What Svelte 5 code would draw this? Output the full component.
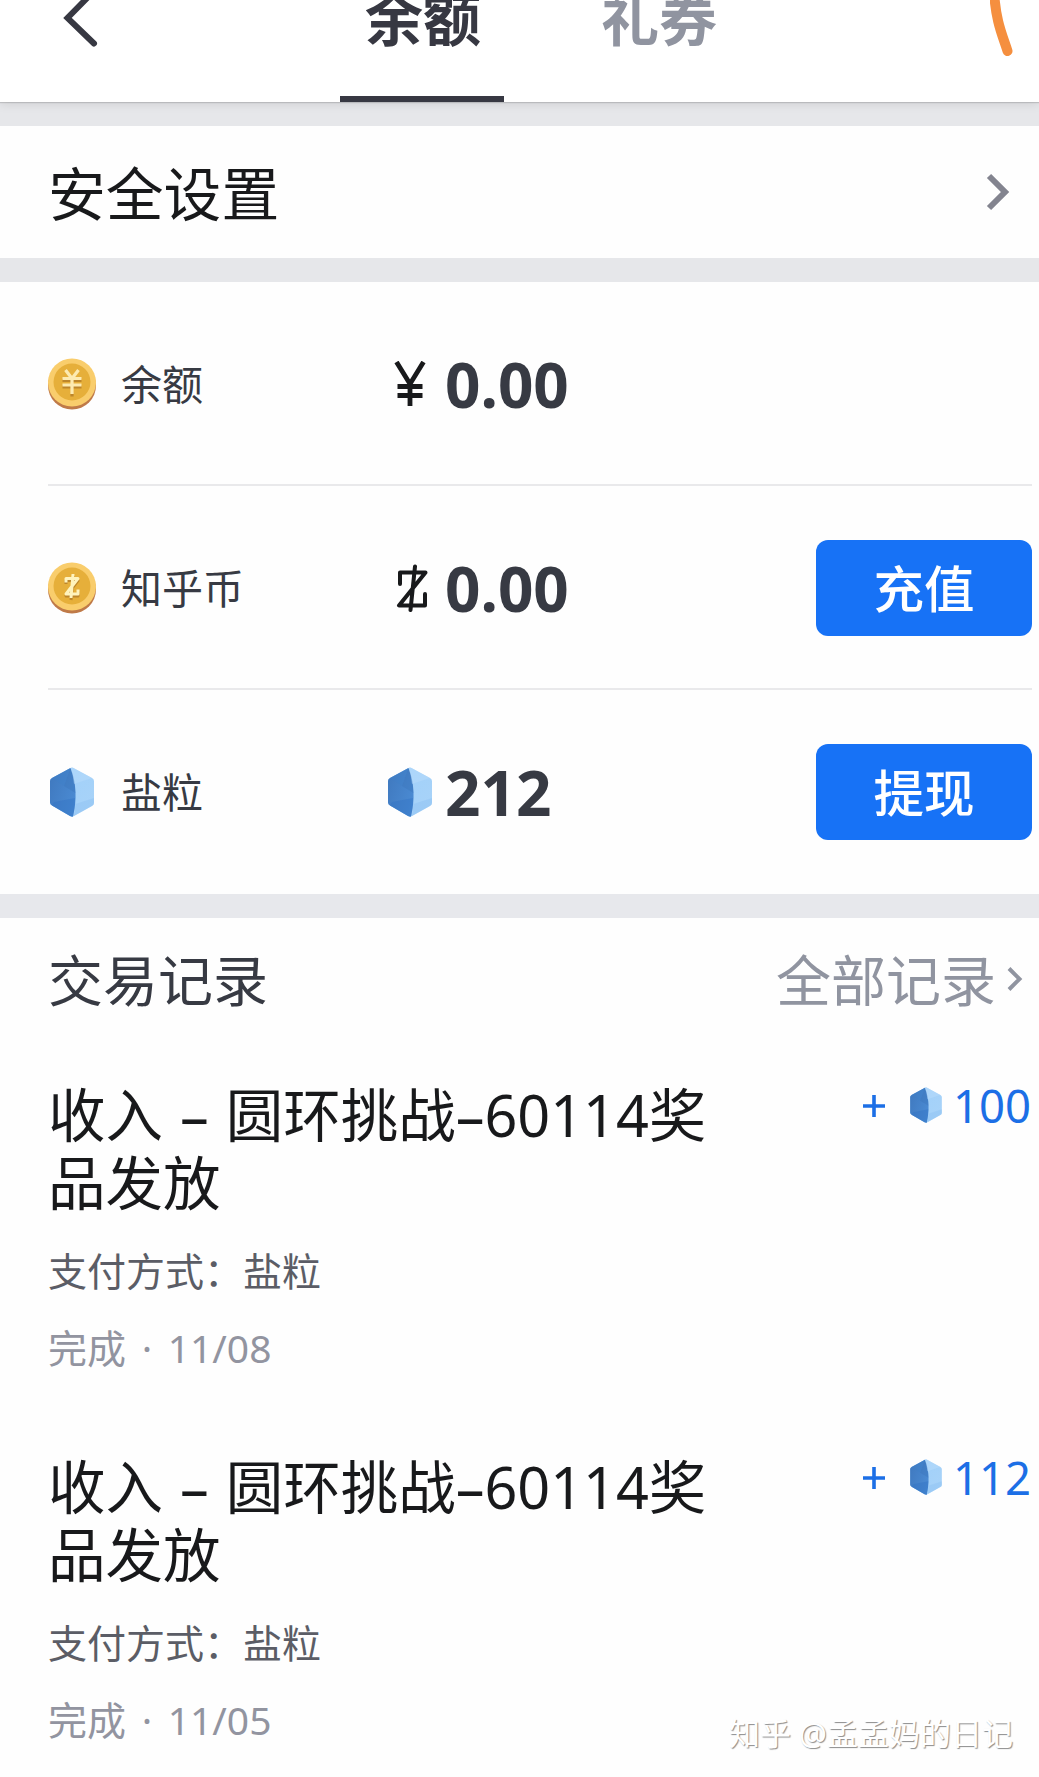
<script>
  const tabs = [
    { name: '余额', active: true },
    { name: '礼券', active: false },
  ];

  const assets = [
    { label: '余额', icon: 'yuan', symbol: 'yuan', value: '0.00', action: '' },
    { label: '知乎币', icon: 'zcoin', symbol: 'z', value: '0.00', action: '充值' },
    { label: '盐粒', icon: 'salt', symbol: 'salt', value: '212', action: '提现' },
  ];

  const records = [
    { title: '收入 – 圆环挑战–60114奖品发放', method: '盐粒', date: '11/08', amount: '100' },
    { title: '收入 – 圆环挑战–60114奖品发放', method: '盐粒', date: '11/05', amount: '112' },
  ];
</script>

{#snippet salt()}
  <svg class="salt" viewBox="0 0 44 50" aria-hidden="true">
    <defs>
      <linearGradient id="saltDark" x1="0" y1="0" x2="1" y2="0.6">
        <stop offset="0" stop-color="#3f78be" />
        <stop offset="1" stop-color="#4a8ad2" />
      </linearGradient>
      <linearGradient id="saltLight" x1="0" y1="0" x2="1" y2="1">
        <stop offset="0" stop-color="#9fd0fa" />
        <stop offset="1" stop-color="#a9d3f8" />
      </linearGradient>
    </defs>
    <path d="M20.500 1Q22 0 23.500 1L42 11Q44 12 44 14V36Q44 38 42 39L24 49Q22 50 20 49L2 38.500Q0 37.500 0 35.500V14Q0 12 2 11Z" fill="url(#saltLight)" />
    <path d="M20.500 1L2 11Q0 12 0 14V35.500Q0 37.500 2 38.500L20 49Q22 50 23 49.500Q26 36 25.500 26Q25 12 20.500 1Z" fill="url(#saltDark)" />
    <path d="M20.500 1L14 19L25.500 26Q25 12 20.500 1Z" fill="#3a74b8" opacity=".35" />
    <path d="M20.500 1L2 11L14 19Z" fill="#3f7fc9" opacity=".4" />
    <path d="M4 35L25 31Q25 41 23 49.500L20 49L2 38.500Z" fill="#2f70c2" opacity=".4" />
    <path d="M20.500 1Q22 0 23.500 1L42 11L24 17Q23 8 20.500 1Z" fill="#b8dcfb" opacity=".5" />
    <path d="M44 31V36Q44 38 42 39L24 49Q25 42 25.300 37Z" fill="#86bdf0" opacity=".35" />
  </svg>
{/snippet}

{#snippet coin(kind)}
  <svg class="coin" viewBox="0 0 48 52" aria-hidden="true">
    <ellipse cx="24" cy="27.500" rx="24" ry="24" fill="#bf7a48" />
    <circle cx="24" cy="24.500" r="24" fill="#f9cd6c" />
    <circle cx="24" cy="24" r="18.500" fill="#e6af3a" />
    {#if kind === 'yuan'}
      <g fill="none" stroke-width="3.200">
        <path d="M14.500 22.500H33.500M14.500 29H33.500M24 36V38.500" stroke="#bd862b" />
        <path d="M17.500 12L24 20.500L30.500 12M24 20V36M14.500 20.500H33.500M14.500 27H33.500" stroke="#fdeab0" />
      </g>
    {:else}
      <g fill="none" stroke-width="3" stroke-linejoin="round">
        <path d="M18 22V18.500H30L18 34H30V29.500M25.500 14L23 38" stroke="#bd862b" />
        <path d="M18 20.500V16.500H30L18 32H30V27.500M25 12L23 36" stroke="#fff3bd" />
      </g>
    {/if}
  </svg>
{/snippet}

<div class="page">
  <header class="top">
    <svg class="back" viewBox="0 0 40 60" aria-label="返回">
      <path d="M32 4L6.500 30L33 55.500" />
    </svg>
    <nav class="tabs">
      {#each tabs as tab}
        <span class="tab" class:active={tab.active}>{tab.name}</span>
      {/each}
    </nav>
    <svg class="mark" viewBox="0 0 30 60" aria-hidden="true">
      <path d="M4 -8C6 22 12 34 17.500 51" />
    </svg>
  </header>

  <section class="security">
    <span>安全设置</span>
    <svg class="next" viewBox="0 0 24 38" aria-hidden="true"><path d="M3 3L19 19L3 35" /></svg>
  </section>

  <section class="assets">
    {#each assets as asset}
      <div class="asset">
        <div class="icon">
          {#if asset.icon === 'salt'}{@render salt()}{:else}{@render coin(asset.icon)}{/if}
        </div>
        <span class="label">{asset.label}</span>
        <div class="symbol">
          {#if asset.symbol === 'yuan'}
            <svg class="glyph" viewBox="0 0 32 46" aria-label="¥">
              <path d="M2.500 1L16 23L29.500 1M16 22V45M3.500 25.500H28.500M3.500 34.500H28.500" stroke-width="4.800" />
            </svg>
          {:else if asset.symbol === 'z'}
            <svg class="glyph z" viewBox="0 0 32 48" aria-hidden="true">
              <path d="M4 20V8.500H29.500L3 41.500H29V30M19 2.500L14.500 46" stroke-width="4" stroke-linecap="round" stroke-linejoin="round" />
            </svg>
          {:else}
            {@render salt()}
          {/if}
        </div>
        <span class="value">{asset.value}</span>
        {#if asset.action}<button class="action">{asset.action}</button>{/if}
      </div>
    {/each}
  </section>

  <section class="history">
    <div class="heading">
      <h2>交易记录</h2>
      <span class="all">
        <span class="all-text">全部记录</span>
        <svg viewBox="0 0 16 24" aria-hidden="true"><path d="M2 1.500L12.500 12L2 22.500" /></svg>
      </span>
    </div>
    {#each records as record}
      <article class="record">
        <div class="info">
          <h3>{record.title}</h3>
          <p class="method">支付方式：{record.method}</p>
          <p class="status">完成 · {record.date}</p>
        </div>
        <div class="amount">
          <svg class="plus" viewBox="0 0 22 22" aria-label="+"><path d="M11 0V22M0 11H22" /></svg>
          {@render salt()}
          <span>{record.amount}</span>
        </div>
      </article>
    {/each}
  </section>

  <div class="watermark">知乎 @孟孟妈的日记</div>
</div>

<style>
  :global(body) {
    background: #fefefe;
  }
  .page {
    position: relative;
    width: 1039px;
    height: 1777px;
    overflow: hidden;
    background: #fefefe;
    color: #18191b;
    font-family: 'Noto Sans', 'Noto Sans CJK SC', sans-serif;
  }
  .top {
    position: relative;
    box-sizing: border-box;
    display: flex;
    height: 102px;
    padding-left: 61px;
    background: #fff;
    box-shadow: 0 1px 1px rgba(0, 0, 0, 0.14), 0 2px 10px rgba(0, 0, 0, 0.1);
  }
  .back {
    width: 40px;
    height: 60px;
    margin-top: -12px;
  }
  .back path,
  .mark path,
  .next path,
  .all path,
  .plus path,
  .glyph path {
    fill: none;
  }
  .back path {
    stroke: #373842;
    stroke-width: 6;
    stroke-linecap: round;
  }
  .tabs {
    display: flex;
    gap: 72px;
    margin-left: 239px;
  }
  .tab {
    box-sizing: border-box;
    width: 164px;
    height: 102px;
    padding-left: 2px;
    color: #9094a0;
    font-size: 58px;
    font-weight: 700;
    line-height: 37px;
    text-align: center;
    white-space: nowrap;
  }
  .tab.active {
    border-bottom: 6px solid #373842;
    color: #373842;
  }
  .mark {
    width: 30px;
    height: 60px;
    margin-left: 250px;
  }
  .mark path {
    stroke: #f58f3f;
    stroke-width: 10;
    stroke-linecap: round;
  }
  .security {
    display: flex;
    align-items: center;
    justify-content: space-between;
    height: 132px;
    padding: 0 29px 0 48px;
    border-top: 24px solid #e6e7ea;
    border-bottom: 24px solid #e6e7ea;
    font-size: 57.800px;
  }
  .security span {
    padding-bottom: 3px;
  }
  .next {
    width: 24px;
    height: 38px;
  }
  .next path {
    stroke: #83848f;
    stroke-width: 6;
  }
  .assets {
    padding: 0 7px 0 48px;
    border-bottom: 24px solid #e7e8ec;
  }
  .asset {
    box-sizing: border-box;
    display: flex;
    align-items: center;
    height: 204px;
    color: #373a43;
    box-shadow: inset 0 -2px #e9e9eb;
  }
  .asset:last-child {
    box-shadow: none;
  }
  .icon {
    display: flex;
    justify-content: center;
    width: 48px;
  }
  .salt {
    display: block;
    width: 44px;
    height: 50px;
  }
  .coin {
    display: block;
    width: 48px;
    height: 52px;
  }
  .label {
    width: 262px;
    margin-left: 25px;
    font-size: 41px;
    line-height: 60px;
  }
  .symbol {
    display: flex;
    justify-content: center;
    width: 54px;
  }
  .glyph {
    width: 32px;
    height: 46px;
  }
  .glyph.z {
    height: 48px;
    margin-left: 3px;
  }
  .glyph path {
    stroke: #18191b;
  }
  .value {
    margin-left: 8px;
    font-size: 62px;
    font-weight: 700;
    line-height: 80px;
  }
  .action {
    width: 216px;
    height: 96px;
    margin-left: auto;
    padding: 2px 0 0;
    border: 0;
    border-radius: 12px;
    background: #1772f6;
    color: #fff;
    font: 500 50.500px/94px 'Noto Sans', 'Noto Sans CJK SC', sans-serif;
  }
  h2,
  h3,
  p {
    margin: 0;
    font-weight: 400;
  }
  .history {
    padding-left: 48px;
  }
  .heading {
    display: flex;
    align-items: center;
    justify-content: space-between;
    height: 122px;
    padding-right: 16px;
    color: #373a43;
    font-size: 55px;
  }
  h2,
  .all-text {
    padding-bottom: 5px;
    font-size: 55px;
  }
  .all {
    display: flex;
    align-items: center;
    gap: 11px;
    color: #9094a0;
  }
  .all svg {
    width: 16px;
    height: 24px;
  }
  .all path {
    stroke: #9094a0;
    stroke-width: 4;
  }
  .record {
    display: flex;
    justify-content: space-between;
    height: 332px;
    padding: 40px 8px 0 0;
  }
  .info {
    width: 670px;
  }
  h3 {
    padding-top: 1px;
    font-size: 57.500px;
    line-height: 68px;
    word-spacing: 2px;
    word-break: break-all;
  }
  .method {
    margin-top: 16px;
    color: #5b5d66;
    font-size: 39px;
    line-height: 76px;
  }
  .status {
    color: #9294a0;
    font-size: 39px;
    line-height: 78px;
    word-spacing: 5.500px;
  }
  .amount {
    display: flex;
    align-items: center;
    height: 50px;
    color: #1c6fe6;
    font-size: 45.500px;
    line-height: 50px;
  }
  .amount .salt {
    width: 32px;
    height: 36px;
    margin: 0 11px 0 25px;
  }
  .plus {
    width: 22px;
    height: 22px;
    margin-top: 1px;
  }
  .plus path {
    stroke: #1c6fe6;
    stroke-width: 3.600;
  }
  .watermark {
    position: absolute;
    right: 26px;
    bottom: 24px;
    color: #fff;
    font-size: 31px;
    line-height: 40px;
    text-shadow: 1px 1px 1px #8c8c8c;
    white-space: nowrap;
  }
</style>
